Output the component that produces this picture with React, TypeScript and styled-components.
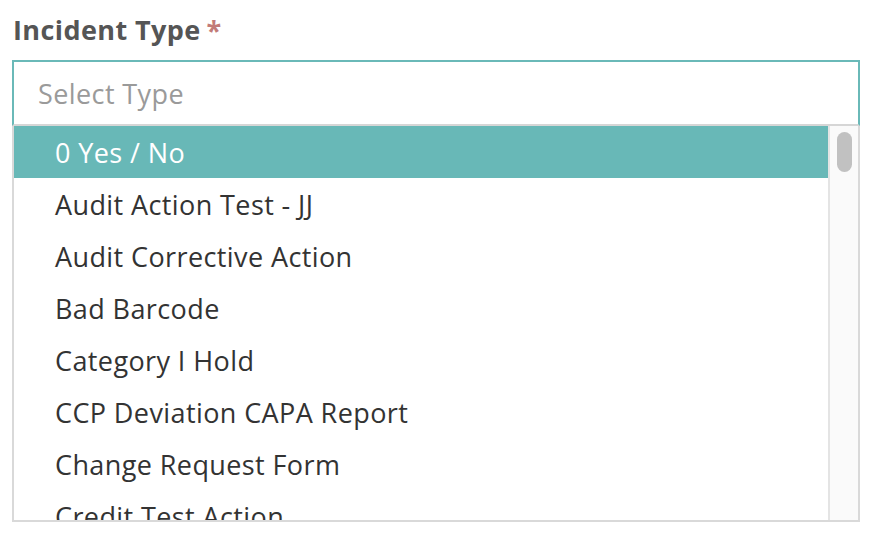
import React from "react";
import styled, { createGlobalStyle } from "styled-components";

const GlobalStyle = createGlobalStyle`
  html, body {
    margin: 0;
    padding: 0;
    background: #ffffff;
    font-family: "Open Sans", "Liberation Sans", sans-serif;
  }
`;

const Field = styled.div`
  width: 848px;
  padding: 14px 0 0 12px;
`;

const Label = styled.label`
  display: block;
  font-size: 27px;
  font-weight: 700;
  letter-spacing: 0.4px;
  color: #555555;
  line-height: 32px;
  margin: 0 0 14px 1px;
`;

const Required = styled.span`
  color: #c27b78;
  margin-left: 6px;
`;

const Input = styled.div`
  height: 66px;
  border: 2px solid #6ab9b8;
  border-bottom-color: #d6d6d6;
  display: flex;
  align-items: center;
  padding: 0 0 0 24px;
  font-size: 27px;
  letter-spacing: 0.4px;
  color: #9a9a9a;
  box-sizing: border-box;
`;

const Menu = styled.div`
  display: flex;
  height: 396px;
  border: 2px solid #d9d9d9;
  border-top: none;
  box-sizing: border-box;
  overflow: hidden;
`;

const Options = styled.ul`
  flex: 1;
  list-style: none;
  margin: 0;
  padding: 0;
  overflow: hidden;
`;

const Option = styled.li<{ $active?: boolean }>`
  height: 52px;
  display: flex;
  align-items: center;
  padding-left: 41px;
  font-size: 27px;
  letter-spacing: 0.4px;
  color: ${(p) => (p.$active ? "#ffffff" : "#333333")};
  background: ${(p) => (p.$active ? "#68b8b7" : "transparent")};
  white-space: nowrap;
`;

const Track = styled.div`
  width: 28px;
  background: #fafafa;
  border-left: 2px solid #e4e4e4;
  display: flex;
  justify-content: center;
  padding-top: 6px;
`;

const Thumb = styled.div`
  width: 15px;
  height: 40px;
  border-radius: 8px;
  background: #c1c1c1;
`;

const options = [
  "0 Yes / No",
  "Audit Action Test - JJ",
  "Audit Corrective Action",
  "Bad Barcode",
  "Category I Hold",
  "CCP Deviation CAPA Report",
  "Change Request Form",
  "Credit Test Action",
];

export default function App() {
  return (
    <>
      <GlobalStyle />
      <Field>
        <Label>
          Incident Type<Required>*</Required>
        </Label>
        <Input>Select Type</Input>
        <Menu>
          <Options>
            {options.map((o, i) => (
              <Option key={o} $active={i === 0}>
                {o}
              </Option>
            ))}
          </Options>
          <Track>
            <Thumb />
          </Track>
        </Menu>
      </Field>
    </>
  );
}
